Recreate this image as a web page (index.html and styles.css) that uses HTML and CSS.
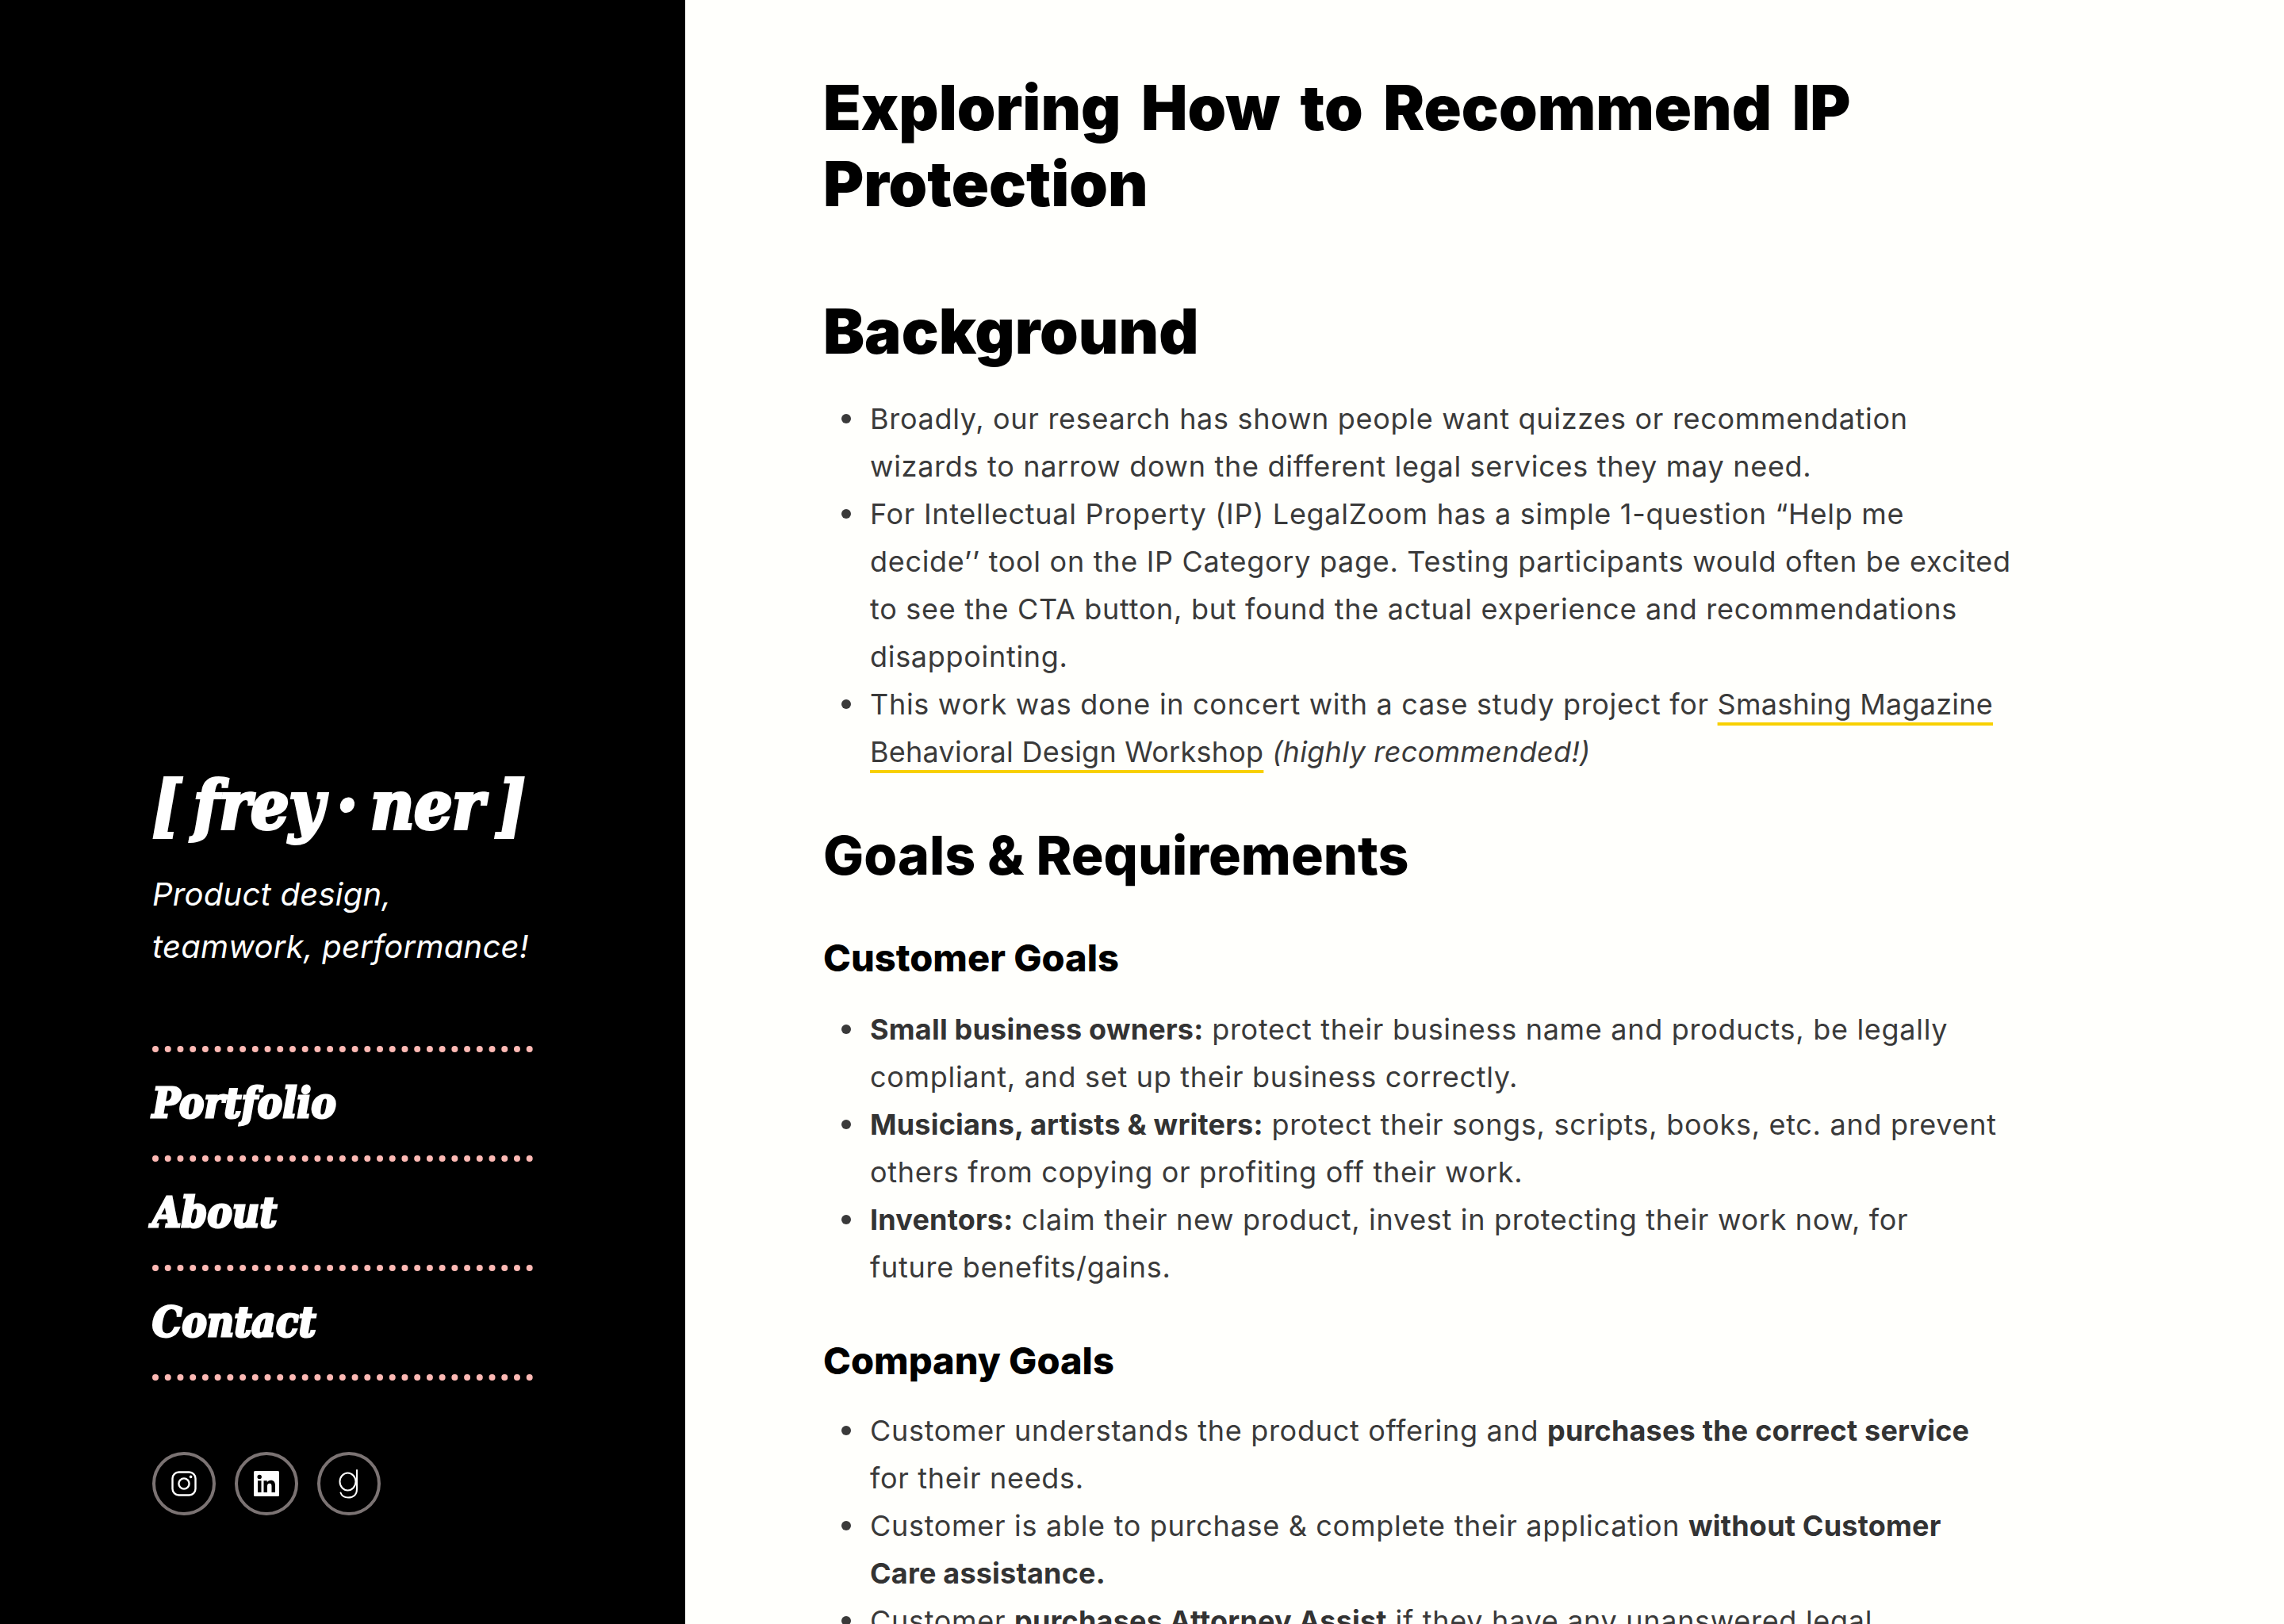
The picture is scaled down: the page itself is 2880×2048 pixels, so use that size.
FILE: index.html
```html
<!DOCTYPE html>
<html lang="en">
<head>
  <meta charset="UTF-8">
  <title>Exploring How to Recommend IP Protection</title>
  <link rel="stylesheet" href="styles.css">
</head>
<body>
  <div class="page">
    <aside class="sidebar">
      <div class="logo">[ frey · ner ]</div>
      <p class="tagline">Product design,<br>teamwork, performance!</p>
      <nav class="nav">
        <a href="#">Portfolio</a>
        <a href="#">About</a>
        <a href="#">Contact</a>
      </nav>
      <div class="social">
        <a href="#" class="social-link">
          <svg width="32" height="32" viewBox="0 0 32 32" fill="none" stroke="#fff" stroke-width="2.4">
            <rect x="1.5" y="1.5" width="29" height="29" rx="8"/>
            <circle cx="16" cy="16" r="6.6"/>
            <circle cx="24.6" cy="7.4" r="1.8" fill="#fff" stroke="none"/>
          </svg>
        </a>
        <a href="#" class="social-link">
          <svg width="32" height="32" viewBox="0 0 32 32">
            <path fill="#fff" d="M1.5 0h29A1.5 1.5 0 0 1 32 1.500v29a1.500 1.500 0 0 1-1.500 1.500h-29A1.500 1.500 0 0 1 0 30.500v-29A1.500 1.500 0 0 1 1.500 0z"/>
            <circle cx="7.200" cy="7.400" r="2.700" fill="#000"/>
            <path fill="#000" d="M5 12.200h4.500V27H5zM12.500 12.200h4.300v2c.9-1.500 2.500-2.400 4.500-2.400 4.200 0 5.700 2.600 5.700 6.600V27h-4.500v-7.700c0-2-.5-3.600-2.500-3.600-2.300 0-3 1.600-3 3.700V27h-4.500z"/>
          </svg>
        </a>
        <a href="#" class="social-link">
          <svg width="26" height="38" viewBox="0 0 26 38" fill="none" stroke="#fff" stroke-width="2" stroke-linecap="round">
            <ellipse cx="11.500" cy="16.500" rx="10" ry="11"/>
            <path d="M23 2v24c0 6.500-4 10.500-11 10.500-4.500 0-8-2-9.500-6"/>
          </svg>
        </a>
      </div>
    </aside>
    <main class="content">
      <h1>Exploring How to Recommend IP<br>Protection</h1>
      <h1 class="section-first">Background</h1>
      <ul>
        <li>Broadly, our research has shown people want quizzes or recommendation<br>wizards to narrow down the different legal services they may need.</li>
        <li>For Intellectual Property (IP) LegalZoom has a simple 1-question “Help me<br>decide’’ tool on the IP Category page. Testing participants would often be excited<br>to see the CTA button, but found the actual experience and recommendations<br>disappointing.</li>
        <li>This work was done in concert with a case study project for <a href="#">Smashing Magazine</a><br><a href="#">Behavioral Design Workshop</a> <em>(highly recommended!)</em></li>
      </ul>
      <h2>Goals &amp; Requirements</h2>
      <h3>Customer Goals</h3>
      <ul>
        <li><strong>Small business owners:</strong> protect their business name and products, be legally<br>compliant, and set up their business correctly.</li>
        <li><strong>Musicians, artists &amp; writers:</strong> protect their songs, scripts, books, etc. and prevent<br>others from copying or profiting off their work.</li>
        <li><strong>Inventors:</strong> claim their new product, invest in protecting their work now, for<br>future benefits/gains.</li>
      </ul>
      <h3 class="company">Company Goals</h3>
      <ul>
        <li>Customer understands the product offering and <strong>purchases the correct service</strong><br>for their needs.</li>
        <li>Customer is able to purchase &amp; complete their application <strong>without Customer<br>Care assistance.</strong></li>
        <li>Customer <strong>purchases Attorney Assist</strong> if they have any unanswered legal</li>
      </ul>
    </main>
  </div>
</body>
</html>
```

FILE: styles.css
```css
html, body {
  margin: 0;
  height: 2048px;
  overflow: hidden;
}

body {
  font-family: Inter, "Noto Sans", sans-serif;
  background: #fffffc;
  color: #3a3a3a;
}

.page {
  display: flex;
  height: 2048px;
  overflow: hidden;
}

.sidebar {
  width: 864px;
  flex: none;
  box-sizing: border-box;
  background: #000;
  color: #fff;
  padding: 0 192px 137px 192px;
  display: flex;
  flex-direction: column;
  justify-content: flex-end;
}

.logo {
  font-family: "DejaVu Serif Condensed", "DejaVu Serif", serif;
  font-weight: bold;
  font-style: italic;
  font-size: 84px;
  line-height: 96px;
  white-space: nowrap;
  word-spacing: -10px;
  -webkit-text-stroke: 4px #fff;
}

.tagline {
  font-style: italic;
  font-size: 40px;
  letter-spacing: 0.25px;
  line-height: 66px;
  margin: 31px 0 92px;
  white-space: nowrap;
}

.nav {
  display: flex;
  flex-direction: column;
  border-top: 8px dotted #fdb9b4;
}

.nav a {
  font-family: "DejaVu Serif Condensed", "DejaVu Serif", serif;
  font-weight: bold;
  font-style: italic;
  font-size: 52px;
  line-height: 128px;
  padding-bottom: 2px;
  letter-spacing: 0.3px;
  color: #fff;
  text-decoration: none;
  border-bottom: 8px dotted #fdb9b4;
  -webkit-text-stroke: 3px #fff;
}

.social {
  display: flex;
  gap: 24px;
  margin-top: 90px;
}

.social-link {
  width: 80px;
  height: 80px;
  box-sizing: border-box;
  border: 4px solid #7b7373;
  border-radius: 50%;
  display: flex;
  align-items: center;
  justify-content: center;
}

.content {
  padding: 0 0 0 174px;
  white-space: nowrap;
}

h1, h2, h3 {
  color: #000;
  font-weight: 800;
  margin: 0;
}

h1 {
  font-size: 78px;
  font-weight: 900;
  word-spacing: 10px;
  line-height: 96px;
  margin-top: 88px;
}

h1.section-first {
  margin-top: 90px;
  margin-bottom: 32px;
}

h2 {
  font-size: 68px;
  line-height: 76px;
  margin-top: 62px;
}

h3 {
  font-size: 47px;
  line-height: 56px;
  margin-top: 64px;
}

h3.company {
  margin-top: 60px;
}

ul {
  list-style: none;
  margin: 30px 0 0;
  padding: 0 0 0 59px;
  font-size: 36px;
  letter-spacing: 0.7px;
  line-height: 60px;
}

h3 + ul {
  margin-top: 32px;
}

h3.company + ul {
  margin-top: 30px;
}

li {
  position: relative;
}

li::before {
  content: "";
  position: absolute;
  left: -36px;
  top: 24px;
  width: 12px;
  height: 12px;
  border-radius: 50%;
  background: #3a3a3a;
}

a {
  color: inherit;
}

li a {
  letter-spacing: 0.25px;
  text-decoration: underline #f8d000 4px;
  text-underline-offset: 10px;
  text-decoration-skip-ink: none;
}

em {
  letter-spacing: 0.3px;
}

strong {
  font-weight: 700;
  letter-spacing: 0.2px;
  color: #333;
}
```
